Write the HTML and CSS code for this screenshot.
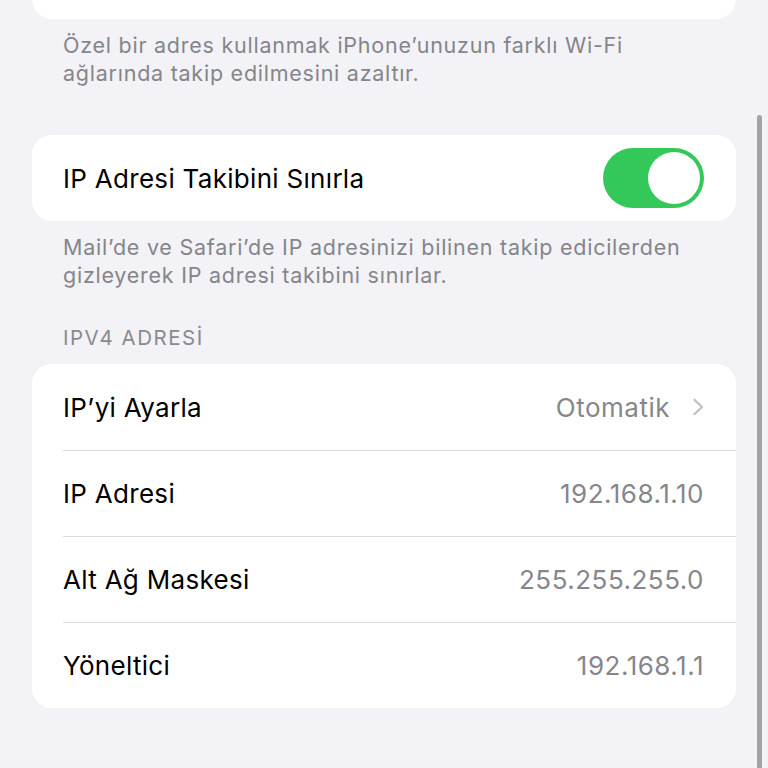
FILE: index.html
```html
<!DOCTYPE html>
<html lang="tr">
<head>
    <meta charset="UTF-8">
    <meta name="viewport" content="width=device-width, initial-scale=1.0">
    <title>Wi-Fi Ayarları</title>
    <link rel="stylesheet" href="styles.css">
</head>
<body>
    <div class="screen">
        <!-- üstteki kartın alt kısmı -->
        <div class="card card-top"></div>
        <p class="note">Özel bir adres kullanmak iPhone’unuzun farklı Wi-Fi ağlarında takip edilmesini azaltır.</p>

        <div class="card">
            <div class="row">
                <span class="label">IP Adresi Takibini Sınırla</span>
                <div class="toggle on"><div class="knob"></div></div>
            </div>
        </div>
        <p class="note">Mail’de ve Safari’de IP adresinizi bilinen takip edicilerden gizleyerek IP adresi takibini sınırlar.</p>

        <div class="section-header">IPV4 ADRESİ</div>
        <div class="card">
            <div class="row">
                <span class="label">IP’yi Ayarla</span>
                <span class="value">Otomatik
                    <svg class="chevron" width="12" height="18" viewBox="0 0 12 18"><polyline points="2.5,1.8 10,9 2.5,16.2" fill="none" stroke="#c4c4c7" stroke-width="2.4" stroke-linecap="round" stroke-linejoin="round"/></svg>
                </span>
            </div>
            <div class="row">
                <span class="label">IP Adresi</span>
                <span class="value">192.168.1.10</span>
            </div>
            <div class="row">
                <span class="label">Alt Ağ Maskesi</span>
                <span class="value">255.255.255.0</span>
            </div>
            <div class="row">
                <span class="label">Yöneltici</span>
                <span class="value">192.168.1.1</span>
            </div>
        </div>
    </div>

    <!-- kaydırma göstergesi -->
    <div class="scroll-indicator"></div>
</body>
</html>
```

FILE: styles.css
```css
* {
    margin: 0;
    padding: 0;
    box-sizing: border-box;
}

body, html {
    height: 100%;
    overflow: hidden;
    background: #f2f2f7;
    font-family: 'Inter', 'Liberation Sans', sans-serif;
    color: #000;
}

.screen {
    padding: 0 32px;
}

.card {
    background: #fff;
    border-radius: 20px;
    overflow: hidden;
}

.card-top {
    height: 40px;
    margin-top: -21px;
}

/* alt açıklama metinleri */
.note {
    font-size: 21.5px;
    line-height: 28px;
    letter-spacing: 0.75px;
    color: #85858a;
    padding: 12px 31px 48px;
}

.section-header {
    font-size: 20.5px;
    line-height: 24px;
    letter-spacing: 1.5px;
    color: #8a8a8e;
    padding: 0 31px;
    margin-top: -11px;
    margin-bottom: 14px;
}

.row {
    height: 86px;
    display: flex;
    align-items: center;
    justify-content: space-between;
    padding: 0 32px 0 31px;
    font-size: 26px;
    letter-spacing: 0.3px;
    position: relative;
}

.row + .row::before {
    content: '';
    position: absolute;
    top: 0;
    left: 31px;
    right: 0;
    height: 1px;
    background: #dcdce0;
}

.value {
    color: #86868b;
    display: flex;
    align-items: center;
    gap: 22px;
    letter-spacing: 0.5px;
}

/* anahtar */
.toggle {
    width: 101px;
    height: 60px;
    border-radius: 30px;
    background: #e9e9eb;
    padding: 4px;
    display: flex;
}

.toggle.on {
    background: #34c759;
    justify-content: flex-end;
}

.knob {
    width: 52px;
    height: 52px;
    border-radius: 50%;
    background: #fff;
}

.scroll-indicator {
    position: fixed;
    right: 6px;
    top: 115px;
    bottom: -20px;
    width: 5px;
    border-radius: 3px;
    background: #a3a3a6;
}
```
